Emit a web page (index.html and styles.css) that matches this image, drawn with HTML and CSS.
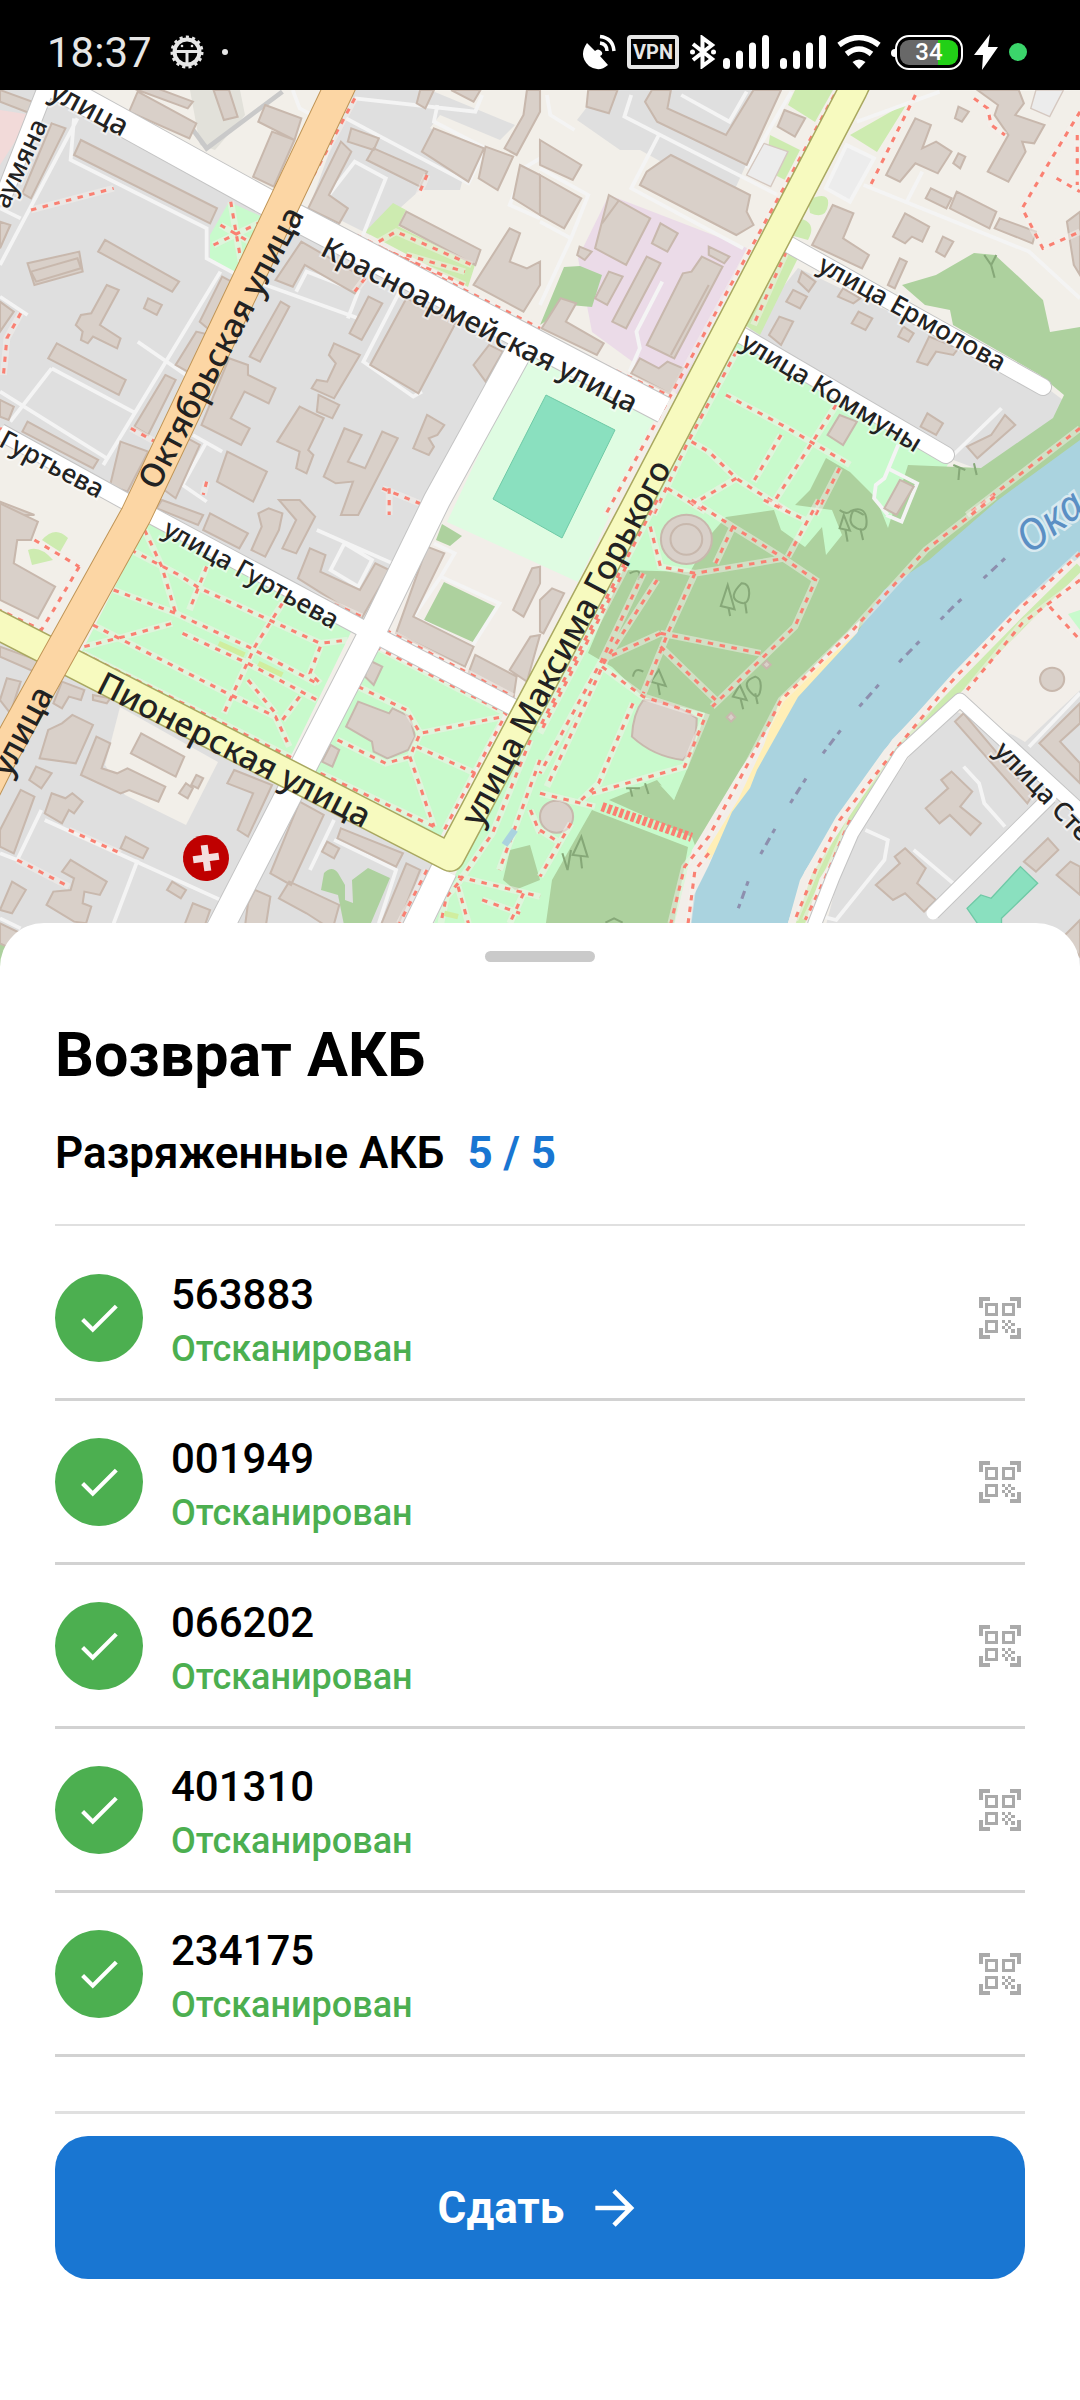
FILE: index.html
```html
<!DOCTYPE html>
<html lang="ru">

<head>
    <meta charset="UTF-8">
    <meta name="viewport" content="width=device-width, initial-scale=1.0">
    <title>Возврат АКБ</title>
    <link rel="stylesheet" href="styles.css">
</head>

<body>
    <!-- общие иконки -->
    <svg class="defs" width="0" height="0">
        <symbol id="check" viewBox="0 0 24 24">
            <path d="M9 16.170L4.830 12 3.410 13.410 9 19 21 7 19.590 5.590z" fill="#fff" />
        </symbol>
        <symbol id="qr" viewBox="0 0 50 50">
            <g transform="translate(4 4)" fill="#aaa">
                <path d="M0 11V0h11v4H4v7zM31 0h11v11h-4V4h-7zM0 31v11h11v-4H4v-7zM42 31v11H31v-4h7v-7z" />
                <path fill-rule="evenodd" d="M6 6h13v13H6zM9 9v7h7V9zM23 6h13v13H23zM26 9v7h7V9zM6 23h13v13H6zM9 26v7h7v-7z" />
                <path d="M23 23h3v3h-3zM29 23h3v3h-3zM26 26h3v3h-3zM32 26h4v3h-4zM23 29h3v3h-3zM29 29h3v3h-3zM26 32h3v4h-3zM32 32h4v4h-4z" />
            </g>
        </symbol>
        <symbol id="signal" viewBox="0 0 46 34">
            <path d="M3.500 26.500v4M16.500 19v11.500M29.500 11v19.500M42.500 3.500v27" fill="none" stroke="#fff" stroke-width="7" stroke-linecap="round" />
        </symbol>
        <!-- пешеходные дорожки, рисуются дважды: подложка и пунктир -->
        <defs>
            <path id="foot-nw" d="M90 375L330 310M670 350L700 530M620 480L760 410M640 420L740 480M60 685L20 760 10 870M0 1030L350 1220M380 1030L450 1070M1030 40L880 330M1035 450L1568 730M1100 470L1150 440 1370 540M1110 490L1350 600M1180 510L1350 560M1240 270L1215 330M1060 580L1030 620M1110 1210L1230 1260M1130 1210V1290M600 1190L590 1230" />
            <path id="foot-ne" d="M855 30L190 1290M715 500L620 720M570 800L430 1070 330 1290M540 930L720 1030 900 1140M440 1070L490 1100 570 1180 720 1280M570 1180L440 1260M370 1210L480 1280M700 1050L620 1190M860 960L680 1250M870 1150L800 1290M1090 30L960 300M1260 40L1300 70 1310 120 1350 150M1568 80L1480 230 1400 370 1460 490 1568 440M1500 280L1568 320M1568 1030L1240 1290M0 750L370 930M1560 150V300" />
            <path id="foot-sw" d="M380 150L520 225 580 265 930 430 1010 420M420 90L470 200 510 340M600 200L550 330M330 270L510 340 720 440 920 550M270 375L660 580 800 650 840 740M245 440L360 410 500 370M820 310L740 440 650 640M530 400L720 490 920 600M720 540L800 640M870 590L820 660M930 440L900 520 930 550M240 460L860 780M1040 560L1180 630 1220 700 1460 650M1210 740L1380 820M1190 770L1260 980M980 720L1120 790 1190 770 1220 700M930 820L1260 980M1090 440L1470 640 1290 990M1120 390L1490 590M230 200L150 340 120 390 0 330M100 120L230 200M200 990L350 1060M50 1080L200 1160M1240 1110L1160 1270M1540 720L1430 1000 1330 1150M1568 780L1450 1110M1330 1130L1450 1160 1568 1190M1330 1150L1230 1270M1300 1170L1280 1270M1400 1200L1510 1240M1330 1160L1360 1270M1520 1180L1480 1270M1540 930L1568 1000M430 60L1050 350" />
            <path id="foot-se" d="M340 0L0 680M440 0L560 80 700 170 800 240 740 380 500 620M560 80L510 190M320 80L350 200 450 220 710 175M450 220L375 390 300 580M350 400L200 470M350 400L640 460M350 440L510 600M810 0L720 170M650 0L770 60M250 200L0 700M300 220L180 480 0 820M340 240L190 480 20 860M180 500L300 590 480 650 420 800 150 880M270 610L170 850 110 910M0 880L160 920M1320 -10L1120 150 900 400 700 600 620 760 490 1010 420 1100 380 1270M490 1060L450 1110 430 1270M1568 160L1400 320 1190 550 1000 790 870 960 800 1110 740 1260M1568 240L1400 370 1240 570M900 960L830 1130 770 1260M90 970L0 1130M1480 320L1568 420M0 990L60 1030" />
        </defs>
    </svg>

    <header class="status">
        <div class="status-left">
            <time>18:37</time>
            <svg width="34" height="34" viewBox="-17 -17 34 34">
                <circle r="14.500" fill="none" stroke="#e6e6e6" stroke-width="4" stroke-dasharray="3 3.070" />
                <circle r="12.500" fill="none" stroke="#e6e6e6" stroke-width="4" />
                <path d="M-12 -.5h24M0 0v13" stroke="#e6e6e6" stroke-width="3" />
                <circle cx="-5" cy="-6" r="1.300" fill="#e6e6e6" />
                <circle cx="5" cy="-6" r="1.300" fill="#e6e6e6" />
            </svg>
            <i class="more"></i>
        </div>
        <div class="status-right">
            <svg width="34" height="36" viewBox="0 0 34 36">
                <path d="M5 9L13 17Q16 14 19 17T18 22L26 31Q17 39 7 32Q-4 22 5 9z" fill="#fff" />
                <path d="M18 9Q25 10 25 17M18 2.500Q31 4 32 17" fill="none" stroke="#fff" stroke-width="3.500" />
            </svg>
            <span class="vpn">VPN</span>
            <svg class="bluetooth" width="26" height="34" viewBox="0 0 26 34">
                <path d="M3 9L22 24 12.500 31V3L22 10 3 25" fill="none" stroke="#fff" stroke-width="4" />
                <circle cx="2.500" cy="17" r="2.500" fill="#fff" />
                <circle cx="23.500" cy="17" r="2.500" fill="#fff" />
            </svg>
            <svg width="46" height="34"><use href="#signal" /></svg>
            <svg width="46" height="34"><use href="#signal" /></svg>
            <svg width="44" height="34" viewBox="0 0 44 34">
                <path d="M2 10Q22 -5 42 10M9.500 19Q22 9 34.500 19" fill="none" stroke="#fff" stroke-width="5.500" />
                <path d="M15.500 27Q22 22 28.500 27L22 34z" fill="#fff" />
            </svg>
            <span class="battery"><span class="level">34</span></span>
            <svg width="24" height="36" viewBox="0 0 24 36">
                <path d="M16 0L0 21H9L8 36 24 13H14z" fill="#fff" />
            </svg>
            <i class="camera"></i>
        </div>
    </header>

    <main>
        <svg class="map" viewBox="0 90 1080 877" role="img" aria-label="Карта">
            <rect y="90" width="1080" height="877" fill="#f2efe9" />

            <!-- кварталы -->
            <g fill="#dfdfdf">
                <path d="M0 90H60L272 205 136 515 0 440z" />
                <path d="M292 215L525 335 360 630 145 512z" />
                <path d="M0 640L450 860 410 967H0z" />
                <path d="M352 90H430L515 125 500 140 440 115 430 128 470 150 460 190 420 190 370 235 310 205z" />
                <path d="M600 90H780L730 200 640 150 620 150 577 120z" />
                <path d="M798 268L1043 385 1063 400 1050 425 980 470 940 455 745 335z" />
                <path d="M957 712L1025 740 1080 690V967H815L850 833 905 753z" />
            </g>
            <path d="M190 90H240L245 115 215 150 200 145z" fill="#e2e1da" />
            <path d="M245 125L285 100 300 130 270 190 215 155z" fill="#f2efe9" />
            <path d="M0 110L32 115 0 165z" fill="#f2dad9" />
            <path d="M0 442L125 510 50 640 0 612z" fill="#f2efe9" />
            <path d="M120 707L218 762 186 825 125 795 105 765z" fill="#f2efe9" />
            <path d="M447 522L580 582 530 690 380 620z" fill="#f2eee9" />
            <path d="M957 700L1080 560V690L1025 742z" fill="#f2eee9" />
            <path d="M609 195L747 248 678 395 592 332 578 258z" fill="#ebdbe8" />

            <!-- парки -->
            <g fill="#c8facc">
                <path d="M148 522L352 630 285 768 80 655z" />
                <path d="M375 648L505 712 437 843 312 775z" />
                <path d="M229 202L265 218 238 275 210 258V235z" />
                <path d="M733 335L950 460 900 560 700 850 690 967H415L455 875 640 515z" />
                <path d="M1080 610L1068 614 1080 630z" />
            </g>
            <g fill="#cdebb0">
                <path d="M393 203L406 210 398 226 475 265 468 287 365 232z" />
                <path d="M795 90H833L815 122 788 105zM908 102L877 152 850 135zM770 135L800 150 785 180 765 170zM798 258L760 335 740 322 780 245zM808 200Q830 190 828 205T810 213zM798 218Q818 222 808 240L790 235z" />
                <path d="M42 540Q55 525 68 538L60 552zM28 550Q40 545 53 560L32 565z" />
            </g>
            <path d="M528 350L657 416 578 582 447 522z" fill="#dffce2" />
            <path d="M546 395L615 430 562 538 493 499z" fill="#8ae0bf" stroke="#6fc9a6" />

            <!-- лес -->
            <g fill="#add19e">
                <path d="M444 582L496 607 475 643 424 620zM442 524L462 536 450 546 436 540zM564 267L580 266 602 275 592 307 570 305 540 325z" />
                <path d="M902 285L936 275 974 253 995 255 1020 278 1043 300 1050 332 1080 327V450L905 600 700 860 692 837 609 800 657 780 674 800 688 767 705 713 643 697 612 667 588 653 623 570 690 572 712 533 726 517 774 510 781 530 805 547 822 527 826 555 842 535 832 510 795 505 810 490 826 458 850 472 876 498 888 528 908 465 981 468 1053 418 1064 395 1040 375 953 325 950 310 925 305z" />
                <path d="M592 810L688 847 666 967H525L545 930 552 880z" />
                <path d="M324 873Q332 865 338 873L345 885V900L353 903 352 880 368 868 390 878 368 930H345L338 895 321 890zM510 850L530 845 540 880 515 890 503 880z" />
                <path d="M0 944L8 940V967H0z" />
            </g>
            <path d="M660 785L677 790 674 800z" fill="#c8facc" />
            <path d="M664 967L692 850 740 770 800 680 860 620 857 637 798 700 750 785 709 862 686 967z" fill="#f2eee9" />
            <path d="M857 633L781 697 764 745 738 800 704 855 710 860 750 795 800 705z" fill="#ffefb7" />
            <path d="M1080 440L998 500 929 560 884 590 857 633 798 697 757 770 750 788 732 812 709 865 694 895 686 967H780L788 923 800 880 836 817 884 750 953 673 1022 603 1080 557z" fill="#aad3df" />

            <!-- северо-запад -->
            <g transform="translate(0 85) scale(.3444 .3333)">
                <g class="service">
                    <path d="M215 100L205 225 600 430V520L690 570 1040 700M225 100L0 540M640 560L300 1140M400 770L540 870M150 850L395 985M150 850L30 1010M0 920L310 1120M860 620L890 560 1040 620 1010 700M1170 600L1055 830 1200 935 1225 920M1005 100L1360 295 1410 190 1260 110 1270 60M955 330L1030 230 1120 280 1050 460M1568 220L1520 250 1480 360 1568 400M560 1050L645 1100M600 1070L530 1200 600 1250M850 15L870 70 940 110M1030 40L1380 80 1400 30M0 635L80 690M0 370L60 400" />
                </g>
                <path d="M820 20L600 190 550 120" fill="none" stroke="#c9c9c9" stroke-width="14" />
                <g class="house">
                    <path d="M0 15L120 60 100 90 0 50zM400 20L570 115 550 160 375 80zM430 0L560 50 545 70 400 15zM620 15H665L690 95 650 105zM770 60L875 100 855 165 750 110zM790 140L855 165 795 305 735 275zM235 165L630 370 610 415 215 210zM150 115L190 130 90 340 65 325z" />
                    <path d="M0 410L30 420 0 490zM80 535L230 500 240 560 100 600zM90 560L225 520 235 550 105 590zM305 465L520 590 500 620 285 500zM310 600L345 615 290 720 350 760 340 790 270 755 255 775 235 765 240 740 220 720 235 690 265 685zM430 640L470 660 455 690 418 670zM165 775L365 885 345 930 140 820zM0 650L40 680 0 740z" />
                    <path d="M0 945L40 965 25 1005 0 995zM80 1010L285 1125 270 1150 65 1040zM480 870L510 885 430 1050 390 1025zM645 575L690 600 620 745 580 710zM570 740L610 750 545 860 510 840zM815 650L840 665 755 830 725 815zM990 170L1020 200 955 330 1010 370 985 415 895 370z" />
                    <path d="M1020 130L1100 160 1085 195 1010 170zM1085 190L1240 260 1220 305 1065 225zM1260 130L1405 190 1360 290 1225 200zM1410 185L1490 215 1445 315 1390 280zM1180 380L1395 495 1380 540 1160 420zM1480 430L1510 445 1480 530 1530 550 1568 530V600L1520 680 1375 600z" />
                    <path d="M875 470L1060 580 1030 625 885 540 850 605 800 585zM1070 635L1110 655 1050 765 1015 745zM1180 640L1325 710 1215 925 1075 840zM970 775L1045 810 970 940 905 910 920 885 950 890 975 835 955 810zM870 965L940 1000 895 1095 910 1110 890 1165 860 1150 870 1100 805 1070zM925 930L985 960 965 1000 920 980zM1240 990L1290 1020 1270 1050 1245 1060 1260 1085 1245 1110 1200 1090zM1420 780L1460 800 1410 890 1375 840z" />
                    <path d="M1000 1030L1050 1050 1010 1130 1060 1150 1110 1040 1155 1060 1040 1290 990 1290 1025 1190 975 1195 940 1175zM665 820L720 840V870L800 910 780 955 710 920 670 1000 725 1030 700 1080 585 1020zM660 1100L775 1160 735 1250 630 1190zM350 1070L430 1100 370 1220 320 1200zM545 1060L580 1080 510 1240 470 1210z" />
                    <path d="M1510 240L1568 270V390L1490 340zM1220 15H1260L1235 70 1210 55zM1310 15H1395L1375 50zM1530 15H1568V80L1500 210 1465 190 1520 90zM0 1250L100 1290H0z" />
                </g>
                <use class="bed" href="#foot-nw" />
                <use class="foot" href="#foot-nw" />
            </g>

            <!-- северо-восток -->
            <g transform="translate(540 85) scale(.3444 .3333)">
                <path d="M650 175L720 200 670 305 600 270zM890 180L970 220 900 350 830 310zM1440 15H1520L1480 95 1425 70z" fill="#ececec" stroke="#d5c8c0" stroke-width="4" />
                <g class="service">
                    <path d="M265 30L245 95 690 330M345 150L265 310 590 490M410 30L550 110 600 20M730 20L600 250M0 250L140 330 90 460 0 410M90 460L0 660M355 590L280 740 290 790 260 860M20 30L30 90 100 135M890 180L970 220 900 350 830 310zM940 300L1420 500 1568 640M1110 260L1065 350M920 110L1160 20M1340 970L1200 1110M1040 1080L1000 1180 975 1200 970 1240 1010 1290M1010 1150L1095 1195 1050 1310 1005 1290" />
                </g>
                <g class="house">
                    <path d="M140 15H225L200 85 135 65zM325 15H380L370 70 540 150 620 15H700L600 240 340 110 305 50zM710 75L770 100 740 155 690 125zM380 210L610 330 600 380 620 420 570 450 290 300 310 260zM0 165L120 240 95 285 0 240zM0 270L120 340 70 430 0 390zM200 330L320 400 250 540 160 490zM350 415L400 445 370 500 325 475z" />
                    <path d="M310 515L350 535 250 730 210 710zM200 560L240 575 195 660 160 640zM470 515L530 545 390 820 310 780 415 565 440 560zM490 600L380 810M490 485L550 515 535 535 490 510zM115 485L150 500 130 525 108 510zM60 640L105 655 75 710 185 775 165 810 5 730zM290 820L345 850 370 830 415 850 375 925 265 865zM230 345L180 415" />
                    <path d="M1090 100L1135 120 1110 190 1150 170 1195 200 1155 265 1090 235 1045 290 1005 270zM1215 65L1245 80 1225 110 1205 100zM1215 205L1235 215 1220 250 1200 235zM1270 15H1390L1405 55 1380 90 1465 120 1435 175 1400 170 1410 200 1360 290 1300 260 1360 150 1320 90 1330 60z" />
                    <path d="M1135 310L1195 340 1180 370 1120 340zM1210 320L1325 380 1305 430 1190 370zM1335 400L1440 440 1430 475 1320 430zM850 360L910 385 880 460 955 510 935 550 790 480zM1060 385L1130 425 1110 470 1080 455 1060 475 1025 455zM1170 455L1200 470 1175 515 1150 500zM1045 520L1065 530 1030 610 1010 600zM1530 410L1568 380V570L1550 540z" />
                    <path d="M760 560L800 590 780 620 750 590zM735 615L775 635 755 670 715 650zM695 695L735 710 700 780 665 750zM925 680L965 700 945 735 905 715zM880 610L930 640 910 655 865 635zM1055 725L1085 745 1070 770 1040 755zM1130 755L1215 790 1200 810 1150 800 1125 840 1095 830zM1125 985L1170 1015 1150 1050 1105 1025zM1350 990L1380 1020 1270 1120 1240 1085 1310 1050zM870 990L920 1010 880 1080 835 1050zM1045 1185L1085 1205 1035 1290 1000 1270z" />
                </g>
                <use class="bed" href="#foot-ne" />
                <use class="foot" href="#foot-ne" />
                <path d="M1290 510L1310 540 1325 510M1310 540L1320 578M1200 1140L1235 1155M1218 1150L1215 1185M1260 1135L1268 1170M870 1275Q890 1290 900 1280T940 1290" fill="none" stroke="#86a878" stroke-width="6" />
            </g>

            <!-- юго-запад -->
            <g transform="translate(0 500) scale(.3444 .3333)">
                <g class="service">
                    <path d="M920 90L1140 190M1000 130L960 210 1040 260 1080 180 1000 130M1260 130L1320 160 1280 230 1200 350 1370 440 1450 310 1280 230M1370 440L1350 500M120 930L50 1080 0 1060M400 1080L330 1270M130 960L640 1200M970 960L900 1110M970 1020L1150 1110 1100 1270M0 1255L60 1285" />
                </g>
                <g class="house">
                    <path d="M0 10L110 65 90 120 50 120 40 190 160 260 110 355 0 300zM0 440L120 485 100 515 0 470zM210 645L270 675 220 790 115 775 140 690 180 670zM105 800L150 820 120 865 85 840zM280 710L320 730 295 805 340 820 370 805 480 860 460 905 375 870 350 880 235 825zM410 700L535 770 510 830 380 760zM570 825L590 835 575 865 555 855zM540 850L560 865 545 895 520 880z" />
                    <path d="M60 870L100 890 40 1060 0 1040V990zM150 880L190 895 210 880 240 905 215 940 200 930 180 970 130 940zM365 1010L430 1045 415 1075 350 1045zM205 1080L310 1145 290 1185 245 1175 240 1210 265 1220 250 1270 215 1265 135 1215 155 1175 205 1170 215 1135 180 1115zM35 1145L75 1170 35 1240 0 1230zM500 1145L540 1170 525 1195 485 1170zM560 1210L610 1230 590 1290 530 1290zM0 1270L60 1300 40 1350 0 1330z" />
                    <path d="M470 0L590 45 575 75 455 25zM610 40L720 100 695 145 590 90zM750 40L780 25 820 40 810 90 770 170 730 150 760 80zM810 0H870L915 50 860 160 820 145 860 60zM900 145L945 165 930 215 1045 270 1090 190 1130 210 1050 355 865 235zM1240 140L1290 160 1200 350 1375 440 1350 500 1150 400zM1380 465L1500 530 1490 600 1360 520zM1568 405L1540 410 1480 510 1530 545zM1545 205L1568 200V250L1520 350 1490 330z" />
                    <path d="M1040 605L1130 640 1140 625 1190 650 1205 710 1185 750 1125 775 1085 755 1080 725 1005 680zM1070 480L1110 500 1085 555 1060 530zM960 735L985 750 965 800 935 785zM680 810L790 855 720 1010 690 990 735 880 660 850zM870 905L940 945 845 1155 785 1120zM840 1145L985 1215 965 1290 890 1240 810 1195zM740 1170L785 1190 770 1290 710 1290 720 1210z" />
                    <path d="M990 985L1170 1060 1150 1100 980 1015zM950 1025L985 1045 970 1075 935 1055zM1180 1090L1220 1110 1150 1290H1100zM20 535L60 545 30 640 0 600zM180 545L245 570 235 600 200 590 180 625 155 610zM270 585L320 595 310 610 270 600z" />
                </g>
                <use class="bed" href="#foot-sw" />
                <use class="foot" href="#foot-sw" />
                <path d="M635 430L710 465M750 490L820 525M1290 1240L1330 1250" stroke="#d0ee9f" stroke-width="16" />
                <path d="M1495 990L1465 1035" stroke="#aad3df" stroke-width="20" />
            </g>

            <!-- юго-восток -->
            <g transform="translate(540 500) scale(.3444 .3333)">
                <path d="M1568 200L1410 360 1220 560 1050 740 900 970 800 1130 750 1290" fill="none" stroke="#f2eee9" stroke-width="70" />
                <path d="M1568 200L1410 360 1220 560 1050 740 900 970 800 1130 750 1290" fill="none" stroke="#cdebb0" stroke-width="26" />
                <path d="M1395 1100L1445 1150 1340 1255V1300H1290L1240 1225 1280 1185 1310 1195z" fill="#8ae0bf" stroke="#6fc9a6" stroke-width="4" />
                <g class="service">
                    <path d="M1230 800L1275 850 1290 910 1350 980M1085 1050L1200 1150M945 990L1010 1020 1000 1080 860 1260 820 1250M1568 580L1420 740" />
                </g>
                <g class="house">
                    <circle cx="425" cy="118" r="74" />
                    <circle cx="425" cy="118" r="46" />
                    <circle cx="48" cy="950" r="48" />
                    <circle cx="1487" cy="538" r="35" />
                    <path d="M300 600Q380 600 455 655 455 740 415 780 330 770 267 710 270 640 300 600zM1230 640L1430 885 1415 910 1205 665zM1568 610L1450 730 1568 850V790L1510 725 1568 670zM1195 815L1255 875 1220 920 1280 970 1250 1005 1190 945 1160 970 1120 925 1185 865 1165 840zM1060 1045L1120 1105 1095 1150 1150 1200 1115 1235 1060 1180 1025 1200 975 1155 1045 1090 1030 1070zM1475 1015L1505 1050 1440 1115 1405 1085zM1540 1085L1568 1100V1185L1500 1125zM1568 1260L1520 1310 1568 1370zM35 265L70 280 10 400 0 395V300zM658 482L670 494 658 506 646 494zM555 638L567 652 555 665 542 652z" />
                </g>
                <path d="M545 255L525 318 565 328zM547 322L552 348M585 250Q610 250 607 285T575 305 585 250zM595 305L600 340M910 30Q945 20 948 60T920 85 910 30zM930 85L938 120M882 45L870 85 900 92zM887 90L893 125M345 510L322 545 365 558zM342 550L348 585M270 530Q275 500 300 515M625 530Q645 535 640 570T610 575 625 530zM625 580L632 612M580 555L560 590 600 600zM582 595L590 628M120 1010L95 1065 138 1070zM118 1070L122 1105M65 1060L80 1110 90 1050M250 865H290M262 865L268 890M305 850L315 882M190 1268L215 1255 240 1268M260 220Q300 200 285 240" fill="none" stroke="#86a878" stroke-width="6" />
                <use class="bed" href="#foot-se" />
                <use class="foot" href="#foot-se" />
                <path d="M180 920L440 1012" stroke="#fa8072" stroke-width="28" stroke-dasharray="11 7" />
                <path d="M1350 175L1200 320 1030 500 910 640 800 790 705 945 620 1100 560 1270" fill="none" stroke="#8d8fae" stroke-width="9" stroke-dasharray="14 17 24 17 14 90" />
            </g>

            <!-- улицы -->
            <g fill="none" stroke-linejoin="round">
                <g stroke="#c4c4c4">
                    <path d="M47 85L0 205M0 432L145 512 362 628 515 708" stroke-width="18" />
                    <path d="M0 55L127 125 272 205 664 410M525 340L437 500 372 633 200 967M444 870L400 960" stroke-width="28" />
                    <path d="M786 243L1043 387M736 332L946 455" stroke-width="18" stroke-linecap="round" />
                    <path d="M802 967L815 923 833 877 852 833 902 753 960 700 1085 815M933 913L1050 797" stroke-width="15" />
                </g>
                <g stroke="#fff">
                    <path d="M47 85L0 205M0 432L145 512 362 628 515 708" stroke-width="16" />
                    <path d="M0 55L127 125 272 205 664 410M525 340L437 500 372 633 200 967M444 870L400 960" stroke-width="26" />
                    <path d="M786 243L1043 387M736 332L946 455" stroke-width="16" stroke-linecap="round" />
                    <path d="M802 967L815 923 833 877 852 833 902 753 960 700 1085 815M933 913L1050 797" stroke-width="13" stroke-linecap="round" />
                </g>
                <path d="M-10 621L450 857 631 515 853 90 860 75" stroke="#a9a860" stroke-width="30" />
                <path d="M-10 621L450 857 631 515 853 90 860 75" stroke="#f7fabf" stroke-width="27" />
                <path d="M345 75L339 88 136 515 0 760-20 800" stroke="#bf9455" stroke-width="32" />
                <path d="M345 75L339 88 136 515 0 760-20 800" stroke="#fcd6a4" stroke-width="30" />
            </g>

            <g transform="translate(206 858) rotate(-8)">
                <circle r="23" fill="#bf0000" />
                <path d="M-13 0H13M0 -13V13" stroke="#f3dede" stroke-width="7" />
            </g>

            <!-- подписи -->
            <g class="street">
                <text transform="translate(122 137) rotate(28)" text-anchor="end">улица</text>
                <text transform="translate(475 334) rotate(27)" text-anchor="middle">Красноармейская улица</text>
            </g>
            <g class="street avenue">
                <text transform="translate(231 353) rotate(-62)" text-anchor="middle">Октябрьская улица</text>
                <text transform="translate(54 694) rotate(-62)" text-anchor="end">улица</text>
                <text transform="translate(229 760) rotate(27)" text-anchor="middle">Пионерская улица</text>
                <text transform="translate(576 648) rotate(-62)" text-anchor="middle">улица Максима Горького</text>
            </g>
            <g class="street lane">
                <text transform="translate(48 124) rotate(-65)" text-anchor="end">аумяна</text>
                <text transform="translate(98 499) rotate(28)" text-anchor="end">Гуртьева</text>
                <text transform="translate(247 582) rotate(29)" text-anchor="middle">улица Гуртьева</text>
                <text transform="translate(908 321) rotate(29)" text-anchor="middle">улица Ермолова</text>
                <text transform="translate(827 400) rotate(31)" text-anchor="middle">улица Коммуны</text>
                <text transform="translate(993 752) rotate(46)">улица Сте</text>
            </g>
            <text class="river" transform="translate(1030 555) rotate(-38)">Ока</text>
        </svg>

        <section class="sheet">
            <div class="handle"></div>
            <h1>Возврат АКБ</h1>
            <h2>Разряженные АКБ <span>5 / 5</span></h2>

            <ul class="list">
                <li>
                    <span class="mark"><svg width="50" height="50"><use href="#check" /></svg></span>
                    <div class="info"><b>563883</b><span>Отсканирован</span></div>
                    <button class="scan" aria-label="Сканировать"><svg width="50" height="50"><use href="#qr" /></svg></button>
                </li>
                <li>
                    <span class="mark"><svg width="50" height="50"><use href="#check" /></svg></span>
                    <div class="info"><b>001949</b><span>Отсканирован</span></div>
                    <button class="scan" aria-label="Сканировать"><svg width="50" height="50"><use href="#qr" /></svg></button>
                </li>
                <li>
                    <span class="mark"><svg width="50" height="50"><use href="#check" /></svg></span>
                    <div class="info"><b>066202</b><span>Отсканирован</span></div>
                    <button class="scan" aria-label="Сканировать"><svg width="50" height="50"><use href="#qr" /></svg></button>
                </li>
                <li>
                    <span class="mark"><svg width="50" height="50"><use href="#check" /></svg></span>
                    <div class="info"><b>401310</b><span>Отсканирован</span></div>
                    <button class="scan" aria-label="Сканировать"><svg width="50" height="50"><use href="#qr" /></svg></button>
                </li>
                <li>
                    <span class="mark"><svg width="50" height="50"><use href="#check" /></svg></span>
                    <div class="info"><b>234175</b><span>Отсканирован</span></div>
                    <button class="scan" aria-label="Сканировать"><svg width="50" height="50"><use href="#qr" /></svg></button>
                </li>
            </ul>

            <div class="footer">
                <button class="submit">
                    Сдать
                    <svg width="56" height="56" viewBox="0 0 24 24">
                        <path d="M4 12H19M12 4.700L19.300 12 12 19.300" fill="none" stroke="#fff" stroke-width="2" />
                    </svg>
                </button>
            </div>
        </section>
    </main>
</body>

</html>
```

FILE: styles.css
```css
* {
    padding: 0;
    margin: 0;
    box-sizing: border-box;
    list-style: none;
    border: 0;
}

body {
    background: #fff;
    color: #000;
    font-family: Roboto, "Noto Sans", sans-serif;
}

svg {
    display: block;
    flex: none;
}

.defs {
    position: absolute;
}

/* строка состояния */
.status {
    display: flex;
    justify-content: space-between;
    align-items: center;
    height: 90px;
    padding: 14px 53px 0 47px;
    background: #000;
    color: #e6e6e6;
}

.status-left,
.status-right {
    display: flex;
    align-items: center;
}

.status-left {
    gap: 18px;
    font-size: 42px;
}

.status-right {
    gap: 11px;
}

.bluetooth {
    margin-right: -4px;
}

.more {
    width: 6px;
    height: 6px;
    border-radius: 50%;
    background: #e6e6e6;
}

.vpn {
    width: 52px;
    height: 34px;
    border: 4px solid #e6e6e6;
    border-radius: 4px;
    font-size: 20px;
    font-weight: 700;
    line-height: 26px;
    text-align: center;
}

.battery {
    position: relative;
    width: 68px;
    height: 35px;
    margin-left: 3px;
    padding: 3px;
    border: 2px solid #fff;
    border-radius: 14px;
}

.battery::before {
    content: "";
    position: absolute;
    left: -6px;
    top: 12px;
    width: 4px;
    height: 8px;
    border-radius: 4px 0 0 4px;
    background: #fff;
}

.level {
    display: block;
    height: 25px;
    border-radius: 9px;
    background: linear-gradient(90deg, #686868 66%, #22d017 66%);
    color: #fff;
    font-size: 24px;
    font-weight: 500;
    line-height: 25px;
    text-align: center;
}

.camera {
    width: 18px;
    height: 18px;
    border-radius: 50%;
    background: #3bd56b;
}

/* карта */
.map {
    width: 100%;
    height: auto;
}

.house {
    fill: #d9d0c9;
    stroke: #c8b8ad;
    stroke-width: 6px;
}

.service {
    fill: none;
    stroke: #f4f4f4;
    stroke-width: 11px;
}

.bed {
    fill: none;
    stroke: rgba(245, 240, 235, 0.5);
    stroke-width: 20px;
}

.foot {
    fill: none;
    stroke: #fa8072;
    stroke-width: 9px;
    stroke-dasharray: 16 19;
}

.street {
    font-family: "Noto Sans", sans-serif;
    font-size: 29px;
    font-weight: 500;
    fill: #222;
    stroke: rgba(255, 255, 255, 0.5);
    stroke-width: 4px;
    paint-order: stroke;
}

.avenue {
    font-size: 33px;
    stroke: none;
}

.lane {
    font-size: 26px;
}

.river {
    font-family: "Noto Sans", sans-serif;
    font-size: 42px;
    font-style: italic;
    fill: #5b8fc4;
    stroke: #d9eaf0;
    stroke-width: 5px;
    paint-order: stroke;
}

/* панель */
.sheet {
    position: relative;
    margin-top: -44px;
    padding: 28px 55px 120px;
    border-radius: 44px 44px 0 0;
    background: #fff;
}

.handle {
    width: 110px;
    height: 11px;
    margin: 0 auto;
    border-radius: 6px;
    background: #cacaca;
}

h1 {
    margin-top: 57px;
    font-size: 61px;
    font-weight: 700;
    line-height: 72px;
}

h2 {
    margin-top: 36px;
    padding-bottom: 45px;
    border-bottom: 2px solid #e0e0e0;
    font-size: 44px;
    font-weight: 600;
    line-height: 52px;
}

h2 span {
    margin-left: 12px;
    color: #1976d2;
    font-weight: 700;
}

.list {
    padding-top: 11px;
}

.list li {
    display: flex;
    align-items: center;
    height: 164px;
    border-bottom: 3px solid #d2d2d2;
}

.mark {
    display: flex;
    justify-content: center;
    align-items: center;
    width: 88px;
    height: 88px;
    border-radius: 50%;
    background: #4caf50;
}

.info {
    flex: 1;
    margin-left: 28px;
}

.info b,
.info span {
    display: block;
    font-weight: 500;
}

.info b {
    font-size: 42px;
    line-height: 62px;
}

.info span {
    color: #4caf50;
    font-size: 36px;
    line-height: 46px;
}

.scan {
    background: none;
}

.footer {
    margin-top: 54px;
    padding-top: 22px;
    border-top: 3px solid #e0e0e0;
}

.submit {
    display: flex;
    justify-content: center;
    align-items: center;
    gap: 22px;
    width: 100%;
    height: 143px;
    border-radius: 33px;
    background: #1976d2;
    color: #fff;
    font: 700 44px/52px Roboto, "Noto Sans", sans-serif;
}
```
